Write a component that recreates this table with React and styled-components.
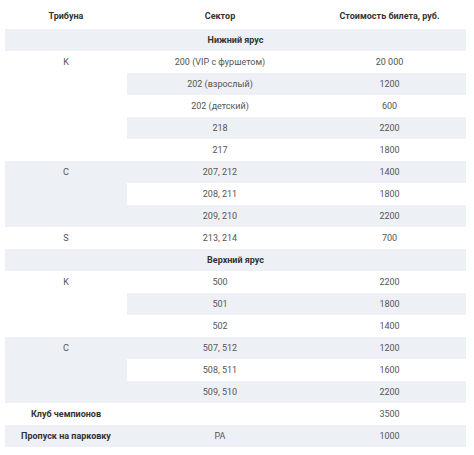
import React from 'react'
import styled, { createGlobalStyle } from 'styled-components'

const GlobalStyle = createGlobalStyle`
  body {
    margin: 0;
    background: #fff;
    font-family: Roboto, "Liberation Sans", Arial, sans-serif;
  }
`

const rows = [
  { tier: 'Нижний ярус' },
  { stand: 'K', span: 5, sector: '200 (VIP с фуршетом)', price: '20 000' },
  { sector: '202 (взрослый)', price: '1200' },
  { sector: '202 (детский)', price: '600' },
  { sector: '218', price: '2200' },
  { sector: '217', price: '1800' },
  { stand: 'C', span: 3, sector: '207, 212', price: '1400' },
  { sector: '208, 211', price: '1800' },
  { sector: '209, 210', price: '2200' },
  { stand: 'S', span: 1, sector: '213, 214', price: '700' },
  { tier: 'Верхний ярус' },
  { stand: 'K', span: 3, sector: '500', price: '2200' },
  { sector: '501', price: '1800' },
  { sector: '502', price: '1400' },
  { stand: 'C', span: 3, sector: '507, 512', price: '1200' },
  { sector: '508, 511', price: '1600' },
  { sector: '509, 510', price: '2200' },
  { stand: 'Клуб чемпионов', bold: true, span: 1, sector: '', price: '3500' },
  { stand: 'Пропуск на парковку', bold: true, span: 1, sector: 'PA', price: '1000' },
]

const Page = styled.div`
  padding: 0 8px 0 5px;
`

const Table = styled.table`
  width: 461px;
  border-collapse: collapse;
  table-layout: fixed;
  font-size: 9px;
  line-height: 12px;
  color: #555;

  tbody tr:nth-child(odd) {
    background: #edf0f5;
  }
`

const Head = styled.th`
  height: 29px;
  padding: 3px 0 0;
  box-sizing: border-box;
  font-weight: 700;
  color: #333;
  text-align: center;
`

const Cell = styled.td`
  height: 22px;
  padding: 0;
  text-align: center;
  vertical-align: middle;
  font-weight: ${p => (p.$bold ? 700 : 400)};
  color: ${p => (p.$bold ? '#333' : '#555')};
`

const StandCell = styled(Cell)`
  vertical-align: top;
  padding-top: 5px;
  height: auto;
`

export default function App() {
  return (
    <Page>
      <GlobalStyle />
      <Table>
        <colgroup>
          <col style={{ width: 122 }} />
          <col style={{ width: 186 }} />
          <col style={{ width: 153 }} />
        </colgroup>
        <thead>
          <tr>
            <Head>Трибуна</Head>
            <Head>Сектор</Head>
            <Head>Стоимость билета, руб.</Head>
          </tr>
        </thead>
        <tbody>
          {rows.map((r, i) =>
            r.tier ? (
              <tr key={i}>
                <Cell colSpan={3} $bold>{r.tier}</Cell>
              </tr>
            ) : (
              <tr key={i}>
                {r.stand && (
                  r.span > 1 ? (
                    <StandCell rowSpan={r.span}>{r.stand}</StandCell>
                  ) : (
                    <Cell $bold={r.bold}>{r.stand}</Cell>
                  )
                )}
                <Cell>{r.sector}</Cell>
                <Cell>{r.price}</Cell>
              </tr>
            )
          )}
        </tbody>
      </Table>
    </Page>
  )
}
